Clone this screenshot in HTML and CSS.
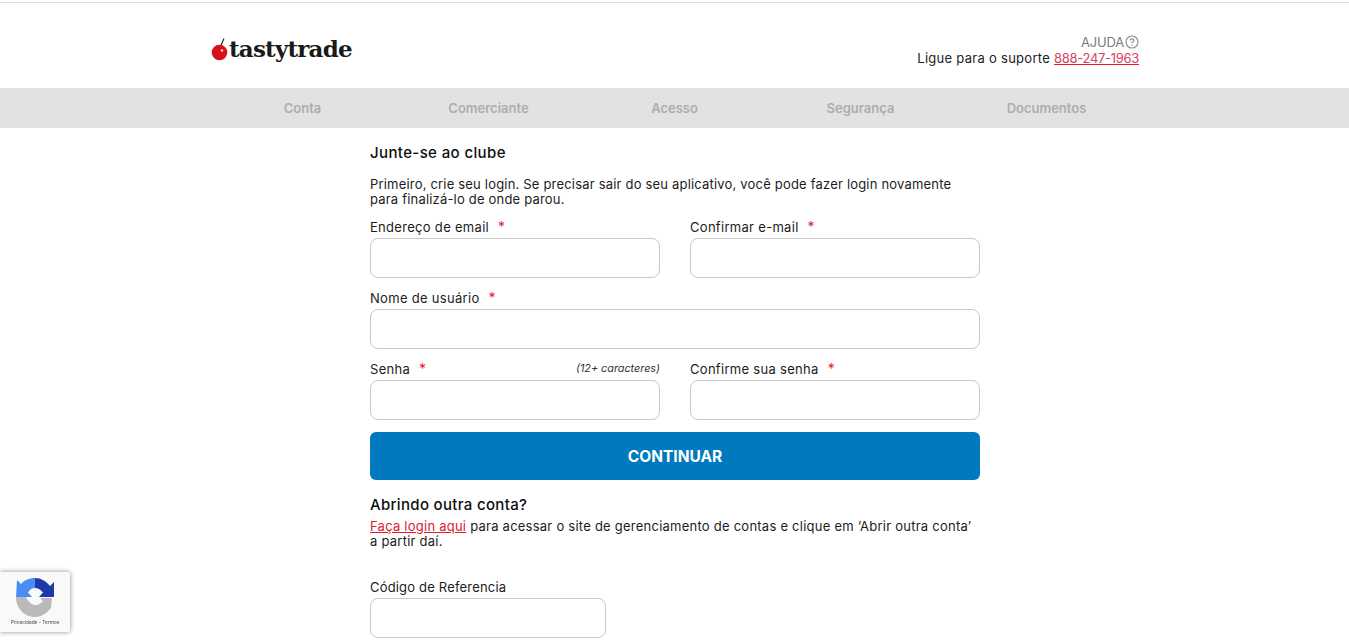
FILE: index.html
```html
<!DOCTYPE html>
<html lang="pt">
<head>
<meta charset="utf-8">
<title>tastytrade</title>
<link rel="stylesheet" href="styles.css">
</head>
<body>
<header class="header">
  <div class="header-inner">
    <a class="logo" href="#">
      <svg class="cherry" width="18" height="24" viewBox="0 0 18 24">
        <path d="M9.5 13 C9.6 9 10.5 5.5 13 1.5" fill="none" stroke="#222" stroke-width="1.2"/>
        <circle cx="8.5" cy="15.5" r="7.8" fill="#d8101c"/>
        <circle cx="11" cy="13.4" r="1.2" fill="#fff" opacity=".85"/>
      </svg>
      <span class="logo-text">tastytrade</span>
    </a>
    <div class="support">
      <div class="help">AJUDA<svg class="help-icon" width="14" height="14" viewBox="0 0 14 14"><circle cx="7" cy="7" r="6" fill="none" stroke="#8c8c8c" stroke-width="1.1"/><path d="M5.2 5.5 C5.2 3.3 8.9 3.3 8.9 5.4 C8.9 6.8 7 6.8 7 8.3" fill="none" stroke="#8c8c8c" stroke-width="1.1"/><circle cx="7" cy="10.2" r=".7" fill="#8c8c8c"/></svg></div>
      <div class="phone-line">Ligue para o suporte <a class="phone" href="#">888-247-1963</a></div>
    </div>
  </div>
</header>
<nav class="steps">
  <div class="steps-inner">
    <span class="step">Conta</span>
    <span class="step">Comerciante</span>
    <span class="step">Acesso</span>
    <span class="step">Segurança</span>
    <span class="step">Documentos</span>
  </div>
</nav>
<main class="form">
  <h1 class="title">Junte-se ao clube</h1>
  <p class="intro">Primeiro, crie seu login. Se precisar sair do seu aplicativo, você pode fazer login novamente para finalizá-lo de onde parou.</p>
  <div class="fields">
    <div class="field">
      <label class="label">Endereço de email <span class="req">*</span></label>
      <input class="input" type="text">
    </div>
    <div class="field">
      <label class="label">Confirmar e-mail <span class="req">*</span></label>
      <input class="input" type="text">
    </div>
    <div class="field wide">
      <label class="label">Nome de usuário <span class="req">*</span></label>
      <input class="input" type="text">
    </div>
    <div class="field">
      <label class="label split"><span>Senha <span class="req">*</span></span><em class="hint">(12+ caracteres)</em></label>
      <input class="input" type="password">
    </div>
    <div class="field">
      <label class="label">Confirme sua senha <span class="req">*</span></label>
      <input class="input" type="password">
    </div>
  </div>
  <button class="submit" type="button">CONTINUAR</button>
  <h2 class="subtitle">Abrindo outra conta?</h2>
  <p class="note"><a class="login-link" href="#">Faça login aqui</a> para acessar o site de gerenciamento de contas e clique em ‘Abrir outra conta’ a partir daí.</p>
  <div class="field referral">
    <label class="label">Código de Referencia</label>
    <input class="input" type="text">
  </div>
</main>
<aside class="recaptcha">
  <svg class="recaptcha-logo" width="38" height="39" viewBox="0 0 38 39">
    <path d="M0 19 L10 19 C11 21 12 23 13.5 24 C15 26 17 27 19.5 27 C23 27 25 25 27 23 L24 20 L36 20 L35 30 C30 36 25 39 19 39 C8 39 0 30 0 19 Z" fill="#bababa"/>
    <path d="M19 0 C13 0 8 2.5 5 6 L1 2 L0 19 L16 19 L12 14.5 C13.5 12 16 10 19 10 Z" fill="#4a8ef5"/>
    <path d="M19 0 L19 10 C22 10 25 12 27 14.5 L23 19 L38 19 L38 4 L34 8 C30 3 25 0 19 0 Z" fill="#1c3aa9"/>
  </svg>
  <div class="recaptcha-text">Privacidade - Termos</div>
</aside>
</body>
</html>
```
FILE: styles.css
```css
* { box-sizing: border-box; }
html, body { margin: 0; padding: 0; }
body {
  background: #fff;
  color: #1c1c1c;
  font-family: "Inter", "Liberation Sans", sans-serif;
  font-size: 13px;
}
.header {
  height: 86px;
  margin-top: 2px;
  border-top: 1px solid #dcdcdc;
}
.header-inner {
  width: 929px;
  margin-left: calc(50% - 464.5px);
  padding-top: 30px;
  display: flex;
  justify-content: space-between;
}
.logo {
  display: flex;
  align-items: flex-end;
  height: 32px;
  padding-left: 1px;
  color: #1a1a1a;
  text-decoration: none;
}
.cherry { margin-bottom: 4px; }
.logo-text {
  font-family: "DejaVu Serif", serif;
  font-weight: 700;
  font-size: 23px;
  line-height: 32px;
  letter-spacing: -0.8px;
}
.support {
  text-align: right;
  line-height: 16px;
  padding-top: 1px;
}
.help {
  color: #7f7a78;
  display: flex;
  justify-content: flex-end;
  align-items: center;
  gap: 1px;
  letter-spacing: -0.2px;
}
.phone-line { color: #222; letter-spacing: 0.28px; }
.phone { color: #d9415e; text-decoration-color: #e8172f; letter-spacing: -0.3px; }
.steps { height: 40px; background: #e2e2e2; }
.steps-inner {
  width: 930px;
  height: 100%;
  margin-left: calc(50% - 465px);
  display: grid;
  grid-template-columns: repeat(5, 1fr);
  align-items: center;
  text-align: center;
}
.step { color: #adadad; font-weight: 600; font-size: 13px; }
.form { width: 610px; margin-left: calc(50% - 304.5px); padding-bottom: 5px; }
.title {
  margin: 0;
  padding-top: 16px;
  font-size: 15px;
  line-height: 18px;
  font-weight: 500;
  color: #0d0d0d;
  letter-spacing: 0.38px;
}
.intro {
  margin: 15px 0 0;
  line-height: 15px;
  padding-right: 20px;
  letter-spacing: 0.19px;
}
.fields {
  margin-top: 12px;
  display: grid;
  grid-template-columns: 1fr 1fr;
  column-gap: 30px;
  row-gap: 12px;
}
.field { display: flex; flex-direction: column; }
.wide { grid-column: 1 / -1; }
.label {
  height: 19px;
  line-height: 16px;
  letter-spacing: 0.3px;
}
.split { display: flex; justify-content: space-between; }
.req { color: #e8172f; margin-left: 5px; font-size: 14px; line-height: 0; }
.hint { font-size: 10.8px; color: #333; letter-spacing: 0; }
.input {
  width: 100%;
  height: 40px;
  border: 1px solid #c8c8c8;
  border-radius: 8px;
  background: #fff;
  outline: none;
}
.submit {
  display: block;
  width: 100%;
  height: 48px;
  margin-top: 12px;
  border: 0;
  border-radius: 6px;
  background: #0079be;
  color: #fff;
  font-family: inherit;
  font-size: 15.5px;
  font-weight: 700;
}
.subtitle {
  margin: 16px 0 0;
  font-size: 15px;
  line-height: 18px;
  font-weight: 500;
  color: #0d0d0d;
  letter-spacing: 0.32px;
}
.note {
  margin: 5px 0 0;
  padding-right: 7px;
  line-height: 15px;
  letter-spacing: 0.24px;
}
.login-link { color: #d9212e; }
.referral { width: 236px; margin-top: 30px; }
.referral .label { letter-spacing: 0.18px; }
.recaptcha {
  position: fixed;
  left: 0;
  top: 572px;
  width: 70px;
  height: 60px;
  background: #f9f9f9;
  border-radius: 0 2px 2px 0;
  box-shadow: 0 0 5px rgba(0,0,0,.45);
  display: flex;
  flex-direction: column;
  align-items: center;
  padding-top: 6px;
}
.recaptcha-logo { display: block; }
.recaptcha-text { font-size: 4.8px; line-height: 8px; margin-top: 1px; color: #444; white-space: nowrap; }
```
